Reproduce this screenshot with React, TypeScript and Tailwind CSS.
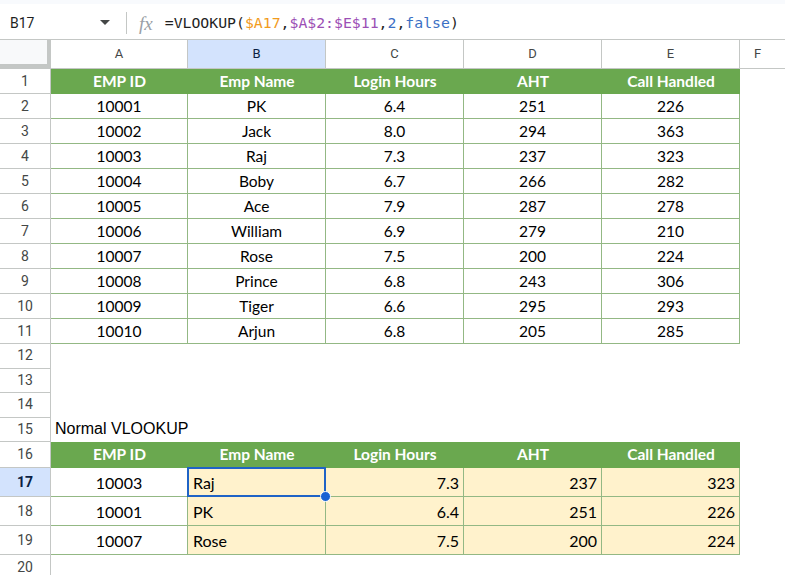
import React from "react";

const GREEN = "bg-[#6aa84f]";
const top = [
  ["10001", "PK", "6.4", "251", "226"],
  ["10002", "Jack", "8.0", "294", "363"],
  ["10003", "Raj", "7.3", "237", "323"],
  ["10004", "Boby", "6.7", "266", "282"],
  ["10005", "Ace", "7.9", "287", "278"],
  ["10006", "William", "6.9", "279", "210"],
  ["10007", "Rose", "7.5", "200", "224"],
  ["10008", "Prince", "6.8", "243", "306"],
  ["10009", "Tiger", "6.6", "295", "293"],
  ["10010", "Arjun", "6.8", "205", "285"],
];
const bottom = [
  ["10003", "Raj", "7.3", "237", "323"],
  ["10001", "PK", "6.4", "251", "226"],
  ["10007", "Rose", "7.5", "200", "224"],
];
const headers = ["EMP ID", "Emp Name", "Login Hours", "AHT", "Call Handled"];
const widths = ["w-[137px]", "w-[138px]", "w-[138px]", "w-[138px]", "w-[138px]"];

function Gutter({ n, sel }: { n: number; sel?: boolean }) {
  return (
    <div
      className={`w-[51px] shrink-0 h-full flex items-center justify-center border-r border-b border-[#c4c7c5] text-[14px] ${
        sel ? "bg-[#d3e3fd] text-[#0b1f44] font-bold" : "bg-white text-[#444746]"
      }`}
      style={{ fontFamily: "Roboto, 'Liberation Sans', sans-serif" }}
    >
      {n}
    </div>
  );
}

const dataFont = { fontFamily: "Lato, 'Open Sans', sans-serif" };

function HeaderRow({ n, h }: { n: number; h: string }) {
  return (
    <div className={`flex ${h}`}>
      <Gutter n={n} />
      {headers.map((t, i) => (
        <div
          key={i}
          className={`${widths[i]} shrink-0 h-full ${GREEN} text-white font-bold text-[15.5px] flex items-center justify-center`}
          style={dataFont}
        >
          {t}
        </div>
      ))}
      <div className="flex-1" />
    </div>
  );
}

function EmptyRow({ n, h, children }: { n: number; h: string; children?: React.ReactNode }) {
  return (
    <div className={`flex ${h}`}>
      <Gutter n={n} />
      <div className="flex-1 relative">{children}</div>
    </div>
  );
}

export default function App() {
  return (
    <div className="w-[785px] h-[575px] overflow-hidden bg-white relative" style={{ fontFamily: "Roboto, 'Liberation Sans', sans-serif" }}>
      <div className="h-[4px] bg-[#f8fafd]" />
      {/* formula bar */}
      <div className="h-[36px] flex items-center pt-[3px] border-b border-[#c4c7c5] bg-white">
        <div className="w-[96px] pl-[10px] text-[14px] text-[#1f1f1f]">B17</div>
        <svg width="10" height="6" viewBox="0 0 10 6" className="ml-[4px]">
          <path d="M0 0 L10 0 L5 5 Z" fill="#444746" />
        </svg>
        <div className="ml-[16px] w-px h-[22px] bg-[#c4c7c5]" />
        <div
          className="ml-[12px] text-[19px] italic text-[#9aa0a6] leading-none"
          style={{ fontFamily: "'Liberation Serif', 'DejaVu Serif', serif" }}
        >
          fx
        </div>
        <div
          className="ml-[12px] text-[14.8px] text-[#1f1f1f] whitespace-nowrap"
          style={{ fontFamily: "'DejaVu Sans Mono', 'Liberation Mono', monospace" }}
        >
          =VLOOKUP(<span className="text-[#f29b1d]">$A17</span>,<span className="text-[#9c4fb5]">$A$2:$E$11</span>,
          <span className="text-[#3b6fc4]">2</span>,<span className="text-[#3b6fc4]">false</span>)
        </div>
      </div>
      {/* column headers */}
      <div className="flex h-[29px] border-b border-[#c4c7c5] text-[13px] text-[#444746]">
        <div className="w-[51px] shrink-0 h-full bg-[#f8f9fa] border-r-[4px] border-b-[4px] border-[#c4c7c5]" />
        {["A", "B", "C", "D", "E"].map((c, i) => (
          <div
            key={c}
            className={`${widths[i]} shrink-0 h-full flex items-center justify-center border-r border-[#c4c7c5] ${
              c === "B" ? "bg-[#d3e3fd] text-[#0b1f44]" : "bg-white"
            }`}
          >
            {c}
          </div>
        ))}
        <div className="flex-1 flex items-center justify-center pr-[10px]">F</div>
      </div>

      <HeaderRow n={1} h="h-[25px]" />
      {top.map((r, ri) => (
        <div key={ri} className="flex h-[25px]">
          <Gutter n={ri + 2} />
          {r.map((v, i) => (
            <div
              key={i}
              className={`${widths[i]} shrink-0 h-full border-r border-b border-[#93b884] flex items-center justify-center pt-[1px] text-[15.5px] text-black`}
              style={dataFont}
            >
              {v}
            </div>
          ))}
          <div className="flex-1" />
        </div>
      ))}
      <EmptyRow n={12} h="h-[24.5px]" />
      <EmptyRow n={13} h="h-[24.5px]" />
      <EmptyRow n={14} h="h-[24.5px]" />
      <EmptyRow n={15} h="h-[24.5px]">
        <div
          className="h-full flex items-end pb-[1px] pl-[4px] text-[16px] text-black whitespace-nowrap"
          style={{ fontFamily: "'Liberation Sans', Arial, sans-serif" }}
        >
          Normal VLOOKUP
        </div>
      </EmptyRow>
      <HeaderRow n={16} h="h-[26px]" />
      {bottom.map((r, ri) => (
        <div key={ri} className="flex h-[29px]">
          <Gutter n={ri + 17} sel={ri === 0} />
          {r.map((v, i) => (
            <div
              key={i}
              className={`${widths[i]} shrink-0 h-full border-r border-b border-[#93b884] flex items-center pt-[1px] text-[16px] text-black relative ${
                i === 0 ? "bg-white justify-center" : i === 1 ? "bg-[#fff2cc] justify-start pl-[5px]" : "bg-[#fff2cc] justify-end pr-[4px]"
              }`}
              style={dataFont}
            >
              {v}
              {ri === 0 && i === 1 && (
                <>
                  <div className="absolute left-[-1px] top-[-1px] right-[-1px] bottom-[-1px] border-2 border-[#1f63c6] pointer-events-none" />
                  <div className="absolute right-[-6px] bottom-[-6px] w-[11px] h-[11px] rounded-full bg-[#1a62d3] border border-white z-10" />
                </>
              )}
            </div>
          ))}
          <div className="flex-1" />
        </div>
      ))}
      <EmptyRow n={20} h="h-[25px]" />
    </div>
  );
}
